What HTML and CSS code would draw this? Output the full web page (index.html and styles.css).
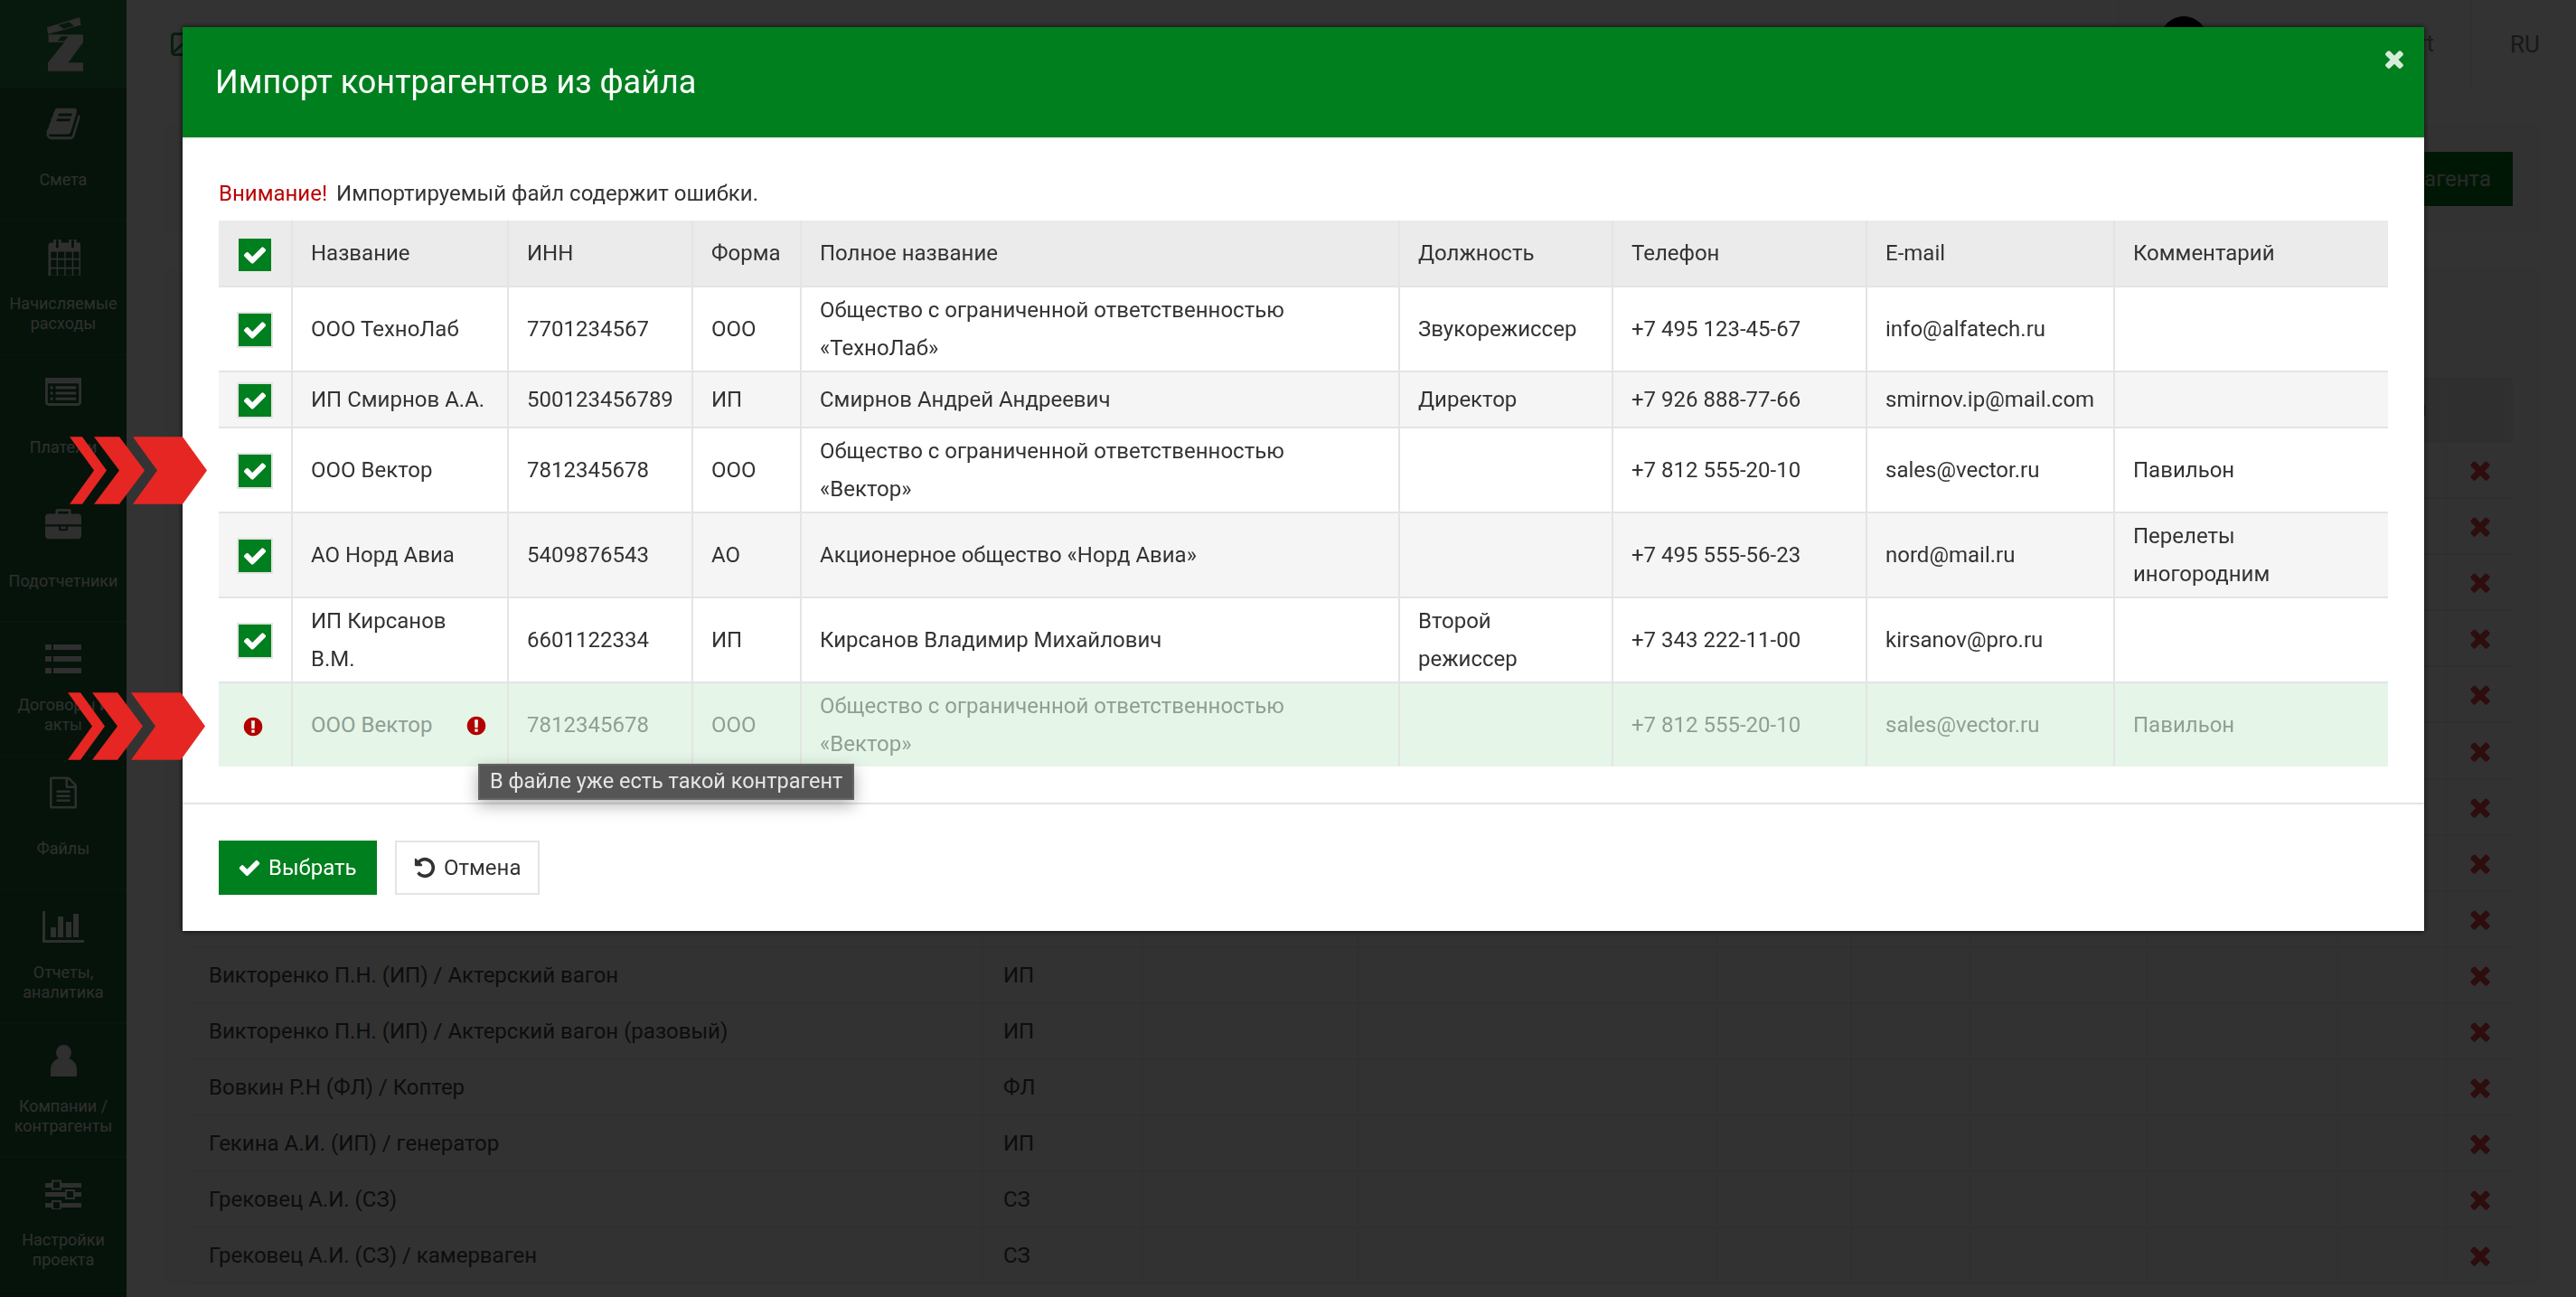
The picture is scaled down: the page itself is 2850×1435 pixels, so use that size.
FILE: index.html
```html
<!DOCTYPE html>
<html lang="ru">
<head>
    <meta charset="UTF-8">
    <title>Импорт контрагентов из файла</title>
    <link rel="stylesheet" href="styles.css">
</head>
<body>
    <svg class="sprite" xmlns="http://www.w3.org/2000/svg">
        <symbol id="i-check" viewBox="0 0 1792 1792"><path d="M1671 566q0 40-28 68l-724 724-136 136q-28 28-68 28t-68-28l-136-136-362-362q-28-28-28-68t28-68l136-136q28-28 68-28t68 28l294 295 656-657q28-28 68-28t68 28l136 136q28 28 28 68z"/></symbol>
        <symbol id="i-times" viewBox="0 0 1792 1792"><path d="M1490 1322q0 40-28 68l-136 136q-28 28-68 28t-68-28l-294-294-294 294q-28 28-68 28t-68-28l-136-136q-28-28-28-68t28-68l294-294-294-294q-28-28-28-68t28-68l136-136q28-28 68-28t68 28l294 294 294-294q28-28 68-28t68 28l136 136q28 28 28 68t-28 68l-294 294 294 294q28 28 28 68z"/></symbol>
        <symbol id="i-alert" viewBox="0 0 1792 1792"><path d="M896 128q209 0 385.5 103t279.5 279.5 103 385.5-103 385.5-279.5 279.5-385.5 103-385.5-103-279.5-279.5-103-385.5 103-385.5 279.5-279.5 385.5-103zm128 1247v-190q0-14-9-23.5t-22-9.5h-192q-13 0-23 10t-10 23v190q0 13 10 23t23 10h192q13 0 22-9.5t9-23.5zm-2-344l18-621q0-12-10-18-10-8-24-8h-220q-14 0-24 8-10 6-10 18l17 621q0 10 10 17.5t24 7.5h185q14 0 23.5-7.5t11.5-17.5z"/></symbol>
        <symbol id="i-undo" viewBox="0 0 1792 1792"><path d="M1664 896q0 156-61 298t-164 245-245 164-298 61q-172 0-327-72.5t-264-204.5q-7-10-6.5-22.5t8.5-20.5l137-138q10-9 25-9 16 2 23 12 73 95 179 147t225 52q104 0 198.5-40.5t163.5-109.5 109.5-163.5 40.5-198.5-40.5-198.5-109.5-163.5-163.5-109.5-198.5-40.5q-98 0-188 35.5t-160 101.5l137 138q31 30 14 69-17 40-59 40h-448q-26 0-45-19t-19-45v-448q0-42 40-59 39-17 69 14l130 129q107-101 244.5-156.5t284.5-55.5q156 0 298 61t245 164 164 245 61 298z"/></symbol>
        <symbol id="i-arrow" viewBox="0 0 152 74.5"><path d="M0 0h14l27 37.25-27 37.25H0l27-37.25zM27 0h28l28 37.25-28 37.25H27l28-37.25zM70 0h55l27 37.25-27 37.25H70l27-37.25z"/></symbol>
    </svg>

    <div class="page">
        <!-- Left navigation -->
        <nav class="sidebar">
            <div class="logo">
                <svg viewBox="0 0 42 62" width="42" height="62">
                    <path fill-rule="evenodd" d="M1 13.3 37 2.3l1.600 8.400-36.600 10zM13.600 10.700l5.700 4.300 11.700-3.300-5.700-4.400z"/>
                    <path fill-rule="evenodd" d="M2.600 21.300h38.400v8.400L24.600 52.300h16.400v9.400H2v-9.400l18.300-22.600H2.600zM12.600 28.300h7.700l4.300-5h-7.600z"/>
                </svg>
            </div>
            <a class="nav-item">
                <span class="nav-icon"><svg viewBox="0 0 1792 1792" width="40" height="40"><path d="M1703 478q40 57 18 129l-275 906q-19 64-76.500 107.500t-122.500 43.500h-923q-77 0-148.500-53.500t-99.500-131.500q-24-67-2-127 0-4 3-27t4-37q1-8-3-21.500t-3-19.500q2-11 8-21t16.500-23.500 16.500-23.500q23-38 45-91.500t30-91.500q3-10 .5-30t-.5-28q3-11 17-28t17-23q21-36 42-92t25-90q1-9-2.500-32t.5-28q4-13 22-30.500t22-22.500q19-26 42.500-84.500t27.500-96.500q1-8-3-25.500t-2-26.500q2-8 9-18t18-23 17-21q8-12 16.500-30.500t15-35 16-36 19.500-32 26.500-23.500 36-11.500 47.500 5.500l-1 3q38-9 51-9h761q74 0 114 56t18 130l-274 906q-36 119-71.500 153.500t-128.500 34.500h-869q-27 0-38 15-11 16-1 43 24 70 144 70h923q29 0 56-15.500t35-41.500l300-987q7-22 5-57 38 15 59 43zm-1064 2q-4 13 2 22.500t20 9.500h608q13 0 25.500-9.500t16.500-22.500l21-64q4-13-2-22.500t-20-9.500h-608q-13 0-25.500 9.500t-16.500 22.500zm-83 256q-4 13 2 22.500t20 9.500h608q13 0 25.500-9.500t16.500-22.500l21-64q4-13-2-22.500t-20-9.500h-608q-13 0-25.500 9.500t-16.500 22.500z"/></svg></span>
                <span class="nav-label">Смета</span>
            </a>
            <a class="nav-item">
                <span class="nav-icon"><svg viewBox="0 120 1664 1550" width="37" height="40" preserveAspectRatio="none"><path d="M192 1664h288v-288h-288v288zm352 0h320v-288h-320v288zm-352-352h288v-320h-288v320zm352 0h320v-320h-320v320zm-352-384h288v-288h-288v288zm736 736h320v-288h-320v288zm-384-736h320v-288h-320v288zm768 736h288v-288h-288v288zm-384-352h320v-320h-320v320zm-352-864v-288q0-13-9.500-22.500t-22.500-9.500h-64q-13 0-22.500 9.500t-9.500 22.500v288q0 13 9.500 22.500t22.500 9.500h64q13 0 22.500-9.500t9.500-22.500zm736 864h288v-320h-288v320zm-384-384h320v-288h-320v288zm384 0h288v-288h-288v288zm32-480v-288q0-13-9.500-22.500t-22.500-9.500h-64q-13 0-22.500 9.500t-9.500 22.500v288q0 13 9.500 22.500t22.500 9.500h64q13 0 22.500-9.500t9.500-22.500zm384-64v1280q0 52-38 90t-90 38h-1408q-52 0-90-38t-38-90v-1280q0-52 38-90t90-38h128v-96q0-66 47-113t113-47h64q66 0 113 47t47 113v96h384v-96q0-66 47-113t113-47h64q66 0 113 47t47 113v96h128q52 0 90 38t38 90z"/></svg></span>
                <span class="nav-label">Начисляемые<br>расходы</span>
            </a>
            <a class="nav-item">
                <span class="nav-icon"><svg viewBox="0 256 1792 1280" width="40" height="31" preserveAspectRatio="none"><path d="M384 1184v64q0 13-9.500 22.500t-22.500 9.500h-64q-13 0-22.500-9.500t-9.500-22.500v-64q0-13 9.500-22.500t22.500-9.500h64q13 0 22.500 9.500t9.500 22.500zm0-256v64q0 13-9.500 22.500t-22.500 9.500h-64q-13 0-22.500-9.500t-9.500-22.500v-64q0-13 9.500-22.500t22.500-9.500h64q13 0 22.500 9.500t9.500 22.500zm0-256v64q0 13-9.500 22.500t-22.500 9.500h-64q-13 0-22.500-9.500t-9.500-22.500v-64q0-13 9.500-22.500t22.500-9.500h64q13 0 22.500 9.500t9.500 22.500zm1152 512v64q0 13-9.500 22.500t-22.500 9.500h-960q-13 0-22.500-9.500t-9.500-22.500v-64q0-13 9.500-22.500t22.500-9.500h960q13 0 22.500 9.500t9.500 22.500zm0-256v64q0 13-9.500 22.500t-22.500 9.500h-960q-13 0-22.500-9.500t-9.500-22.500v-64q0-13 9.500-22.500t22.500-9.500h960q13 0 22.500 9.500t9.500 22.500zm0-256v64q0 13-9.500 22.500t-22.500 9.500h-960q-13 0-22.500-9.500t-9.500-22.500v-64q0-13 9.500-22.500t22.500-9.500h960q13 0 22.500 9.500t9.500 22.500zm128 704v-832q0-13-9.500-22.500t-22.500-9.500h-1472q-13 0-22.500 9.500t-9.500 22.500v832q0 13 9.500 22.500t22.500 9.500h1472q13 0 22.500-9.500t9.500-22.500zm128-1088v1088q0 66-47 113t-113 47h-1472q-66 0-113-47t-47-113v-1088q0-66 47-113t113-47h1472q66 0 113 47t47 113z"/></svg></span>
                <span class="nav-label">Платежи</span>
            </a>
            <a class="nav-item">
                <span class="nav-icon"><svg viewBox="0 0 1792 1664" width="40" height="36" preserveAspectRatio="none"><path d="M640 256h512v-128h-512v128zm1152 640v480q0 66-47 113t-113 47h-1472q-66 0-113-47t-47-113v-480h672v160q0 26 19 45t45 19h320q26 0 45-19t19-45v-160h672zm-768 0v128h-256v-128h256zm768-480v384h-1792v-384q0-66 47-113t113-47h352v-160q0-40 28-68t68-28h576q40 0 68 28t28 68v160h352q66 0 113 47t47 113z"/></svg></span>
                <span class="nav-label">Подотчетники</span>
            </a>
            <a class="nav-item">
                <span class="nav-icon"><svg viewBox="0 0 40 33" width="40" height="33"><rect width="7" height="6" y="0"/><rect x="9" width="31" height="6" y="0"/><rect width="7" height="6" y="13"/><rect x="9" width="31" height="6" y="13"/><rect width="7" height="6" y="26"/><rect x="9" width="31" height="6" y="26"/></svg></span>
                <span class="nav-label">Договоры и<br>акты</span>
            </a>
            <a class="nav-item">
                <span class="nav-icon"><svg viewBox="128 0 1536 1792" width="30" height="36"><path d="M1596 380q28 28 48 76t20 88v1152q0 40-28 68t-68 28h-1344q-40 0-68-28t-28-68v-1600q0-40 28-68t68-28h896q40 0 88 20t76 48zm-444-244v376h376q-10-29-22-41l-313-313q-12-12-41-22zm384 1528v-1024h-416q-40 0-68-28t-28-68v-416h-768v1536h1280zm-1024-864q0-14 9-23t23-9h704q14 0 23 9t9 23v64q0 14-9 23t-23 9h-704q-14 0-23-9t-9-23v-64zm736 224q14 0 23 9t9 23v64q0 14-9 23t-23 9h-704q-14 0-23-9t-9-23v-64q0-14 9-23t23-9h704zm0 256q14 0 23 9t9 23v64q0 14-9 23t-23 9h-704q-14 0-23-9t-9-23v-64q0-14 9-23t23-9h704z"/></svg></span>
                <span class="nav-label">Файлы</span>
            </a>
            <a class="nav-item">
                <span class="nav-icon"><svg viewBox="0 0 46 35" width="46" height="35"><rect width="3" height="35"/><rect y="32" width="46" height="3"/><rect x="9" y="18" width="6" height="11"/><rect x="17" y="6" width="6" height="23"/><rect x="26" y="12" width="6" height="17"/><rect x="34" y="3" width="6" height="26"/></svg></span>
                <span class="nav-label">Отчеты,<br>аналитика</span>
            </a>
            <a class="nav-item">
                <span class="nav-icon"><svg viewBox="0 0 29 35" width="29" height="35"><ellipse cx="14.500" cy="8.500" rx="8.500" ry="8.500"/><path d="M0 35v-8c0-7 6-12 10-12 3 2 6 2 9 0 4 0 10 5 10 12v8q0 0-3 0H3q-3 0-3 0z"/></svg></span>
                <span class="nav-label">Компании /<br>контрагенты</span>
            </a>
            <a class="nav-item">
                <span class="nav-icon"><svg class="sliders" viewBox="0 0 40 33" width="40" height="33"><rect y="4" width="40" height="5"/><rect y="14" width="40" height="5"/><rect y="26" width="40" height="5"/><rect class="knob" x="8" y="1.500" width="9" height="9"/><rect class="knob" x="23" y="12" width="9" height="9"/><rect class="knob" x="8" y="24" width="9" height="9"/></svg></span>
                <span class="nav-label">Настройки<br>проекта</span>
            </a>
        </nav>

        <!-- Page behind the dialog -->
        <main class="content">
            <header class="topbar">
                <svg class="topbar-icon" viewBox="0 0 26 26" width="26" height="26"><rect x="1.500" y="1.500" width="23" height="23" rx="3"/><path d="M3 22 16 10l8 8"/></svg>
                <div class="topbar-user">
                    <span class="avatar"></span>
                    <span class="user-name">Alex Smart</span>
                </div>
                <span class="lang">RU</span>
            </header>
            <section class="panel panel-actions">
                <button class="add-button">Добавить контрагента</button>
            </section>
            <section class="panel panel-list">
                <div class="list">
                    <div class="list-row list-head"><span class="list-name"></span><span></span><span></span><span></span><span></span><span></span><span></span><span></span><span class="head-end">Опции</span><span></span></div>
                    <div class="list-row"><span class="list-name"></span><span></span><span></span><span></span><span></span><span></span><span></span><span></span><span></span><span class="list-del"><svg><use href="#i-times"/></svg></span></div>
                    <div class="list-row"><span class="list-name"></span><span></span><span></span><span></span><span></span><span></span><span></span><span></span><span></span><span class="list-del"><svg><use href="#i-times"/></svg></span></div>
                    <div class="list-row"><span class="list-name"></span><span></span><span></span><span></span><span></span><span></span><span></span><span></span><span></span><span class="list-del"><svg><use href="#i-times"/></svg></span></div>
                    <div class="list-row"><span class="list-name"></span><span></span><span></span><span></span><span></span><span></span><span></span><span></span><span></span><span class="list-del"><svg><use href="#i-times"/></svg></span></div>
                    <div class="list-row"><span class="list-name"></span><span></span><span></span><span></span><span></span><span></span><span></span><span></span><span></span><span class="list-del"><svg><use href="#i-times"/></svg></span></div>
                    <div class="list-row"><span class="list-name"></span><span></span><span></span><span></span><span></span><span></span><span></span><span></span><span></span><span class="list-del"><svg><use href="#i-times"/></svg></span></div>
                    <div class="list-row"><span class="list-name"></span><span></span><span></span><span></span><span></span><span></span><span></span><span></span><span></span><span class="list-del"><svg><use href="#i-times"/></svg></span></div>
                    <div class="list-row"><span class="list-name"></span><span></span><span></span><span></span><span></span><span></span><span></span><span></span><span></span><span class="list-del"><svg><use href="#i-times"/></svg></span></div>
                    <div class="list-row"><span class="list-name">Викторенко П.Н. (ИП) / Транспорт</span><span>ИП</span><span></span><span></span><span></span><span></span><span></span><span></span><span></span><span class="list-del"><svg><use href="#i-times"/></svg></span></div>
                    <div class="list-row"><span class="list-name">Викторенко П.Н. (ИП) / Актерский вагон</span><span>ИП</span><span></span><span></span><span></span><span></span><span></span><span></span><span></span><span class="list-del"><svg><use href="#i-times"/></svg></span></div>
                    <div class="list-row"><span class="list-name">Викторенко П.Н. (ИП) / Актерский вагон (разовый)</span><span>ИП</span><span></span><span></span><span></span><span></span><span></span><span></span><span></span><span class="list-del"><svg><use href="#i-times"/></svg></span></div>
                    <div class="list-row"><span class="list-name">Вовкин Р.Н (ФЛ) / Коптер</span><span>ФЛ</span><span></span><span></span><span></span><span></span><span></span><span></span><span></span><span class="list-del"><svg><use href="#i-times"/></svg></span></div>
                    <div class="list-row"><span class="list-name">Гекина А.И. (ИП) / генератор</span><span>ИП</span><span></span><span></span><span></span><span></span><span></span><span></span><span></span><span class="list-del"><svg><use href="#i-times"/></svg></span></div>
                    <div class="list-row"><span class="list-name">Грековец А.И. (СЗ)</span><span>СЗ</span><span></span><span></span><span></span><span></span><span></span><span></span><span></span><span class="list-del"><svg><use href="#i-times"/></svg></span></div>
                    <div class="list-row"><span class="list-name">Грековец А.И. (СЗ) / камерваген</span><span>СЗ</span><span></span><span></span><span></span><span></span><span></span><span></span><span></span><span class="list-del"><svg><use href="#i-times"/></svg></span></div>
                </div>
            </section>
        </main>
    </div>

    <div class="overlay"></div>

    <!-- Import dialog -->
    <div class="modal">
        <div class="modal-header">
            <h1 class="modal-title">Импорт контрагентов из файла</h1>
            <svg class="modal-close"><use href="#i-times"/></svg>
        </div>
        <div class="modal-body">
            <p class="notice"><b class="notice-mark">Внимание!</b> Импортируемый файл содержит ошибки.</p>
            <table class="import-table">
                <colgroup>
                    <col class="col-check"><col class="col-name"><col class="col-inn"><col class="col-form"><col class="col-full"><col class="col-post"><col class="col-phone"><col class="col-mail"><col class="col-note">
                </colgroup>
                <thead>
                    <tr>
                        <th class="cell-check"><span class="check check-plain"><svg><use href="#i-check"/></svg></span></th>
                        <th>Название</th><th>ИНН</th><th>Форма</th><th>Полное название</th><th>Должность</th><th>Телефон</th><th>E-mail</th><th>Комментарий</th>
                    </tr>
                </thead>
                <tbody>
                    <tr>
                        <td class="cell-check"><span class="check"><svg><use href="#i-check"/></svg></span></td>
                        <td>ООО ТехноЛаб</td><td>7701234567</td><td>ООО</td>
                        <td>Общество с ограниченной ответственностью<br>«ТехноЛаб»</td>
                        <td>Звукорежиссер</td><td>+7 495 123-45-67</td><td>info@alfatech.ru</td><td></td>
                    </tr>
                    <tr class="row-short">
                        <td class="cell-check"><span class="check"><svg><use href="#i-check"/></svg></span></td>
                        <td>ИП Смирнов А.А.</td><td>500123456789</td><td>ИП</td>
                        <td>Смирнов Андрей Андреевич</td>
                        <td>Директор</td><td>+7 926 888-77-66</td><td>smirnov.ip@mail.com</td><td></td>
                    </tr>
                    <tr>
                        <td class="cell-check"><span class="check"><svg><use href="#i-check"/></svg></span></td>
                        <td>ООО Вектор</td><td>7812345678</td><td>ООО</td>
                        <td>Общество с ограниченной ответственностью<br>«Вектор»</td>
                        <td></td><td>+7 812 555-20-10</td><td>sales@vector.ru</td><td>Павильон</td>
                    </tr>
                    <tr>
                        <td class="cell-check"><span class="check"><svg><use href="#i-check"/></svg></span></td>
                        <td>АО Норд Авиа</td><td>5409876543</td><td>АО</td>
                        <td>Акционерное общество «Норд Авиа»</td>
                        <td></td><td>+7 495 555-56-23</td><td>nord@mail.ru</td><td>Перелеты<br>иногородним</td>
                    </tr>
                    <tr>
                        <td class="cell-check"><span class="check"><svg><use href="#i-check"/></svg></span></td>
                        <td>ИП Кирсанов<br>В.М.</td><td>6601122334</td><td>ИП</td>
                        <td>Кирсанов Владимир Михайлович</td>
                        <td>Второй<br>режиссер</td><td>+7 343 222-11-00</td><td>kirsanov@pro.ru</td><td></td>
                    </tr>
                    <tr class="row-error">
                        <td class="cell-check"><svg class="alert-icon alert-lead"><use href="#i-alert"/></svg></td>
                        <td class="cell-name">ООО Вектор
                            <svg class="alert-icon alert-name"><use href="#i-alert"/></svg>
                            <span class="tooltip">В файле уже есть такой контрагент</span>
                        </td>
                        <td>7812345678</td><td>ООО</td>
                        <td>Общество с ограниченной ответственностью<br>«Вектор»</td>
                        <td></td><td>+7 812 555-20-10</td><td>sales@vector.ru</td><td>Павильон</td>
                    </tr>
                </tbody>
            </table>
        </div>
        <div class="modal-footer">
            <button class="btn btn-primary"><svg><use href="#i-check"/></svg>Выбрать</button>
            <button class="btn btn-cancel"><svg><use href="#i-undo"/></svg>Отмена</button>
        </div>
    </div>

    <!-- Callout arrows -->
    <svg class="callout callout-first"><use href="#i-arrow"/></svg>
    <svg class="callout callout-second"><use href="#i-arrow"/></svg>
</body>
</html>
```
FILE: styles.css
```css
/* Reset */
html, body {
    margin: 0;
    padding: 0;
    height: 100%;
    overflow: hidden;
}

body {
    font-family: Roboto, "Liberation Sans", sans-serif;
    font-size: 24px;
    color: #333;
    background: #fff;
}

.sprite {
    position: absolute;
    width: 0;
    height: 0;
}

/* Page behind the dialog */
.page {
    display: flex;
    height: 100vh;
    overflow: hidden;
}

.sidebar {
    flex: 0 0 140px;
    display: flex;
    flex-direction: column;
    background-color: #1c6234;
    color: #e8e8e8;
    fill: #e8e8e8;
}

.logo {
    height: 97px;
    display: flex;
    justify-content: center;
    align-items: flex-start;
    box-sizing: border-box;
    background-color: #257a40;
}

.logo svg {
    margin: 17px 0 0 3px;
}

.nav-item {
    height: 148px;
    flex: none;
    box-sizing: border-box;
    border-bottom: 2px solid #276f3f;
    padding-top: 14px;
    display: flex;
    flex-direction: column;
    align-items: center;
}

.nav-icon {
    height: 52px;
    display: flex;
    align-items: center;
    justify-content: center;
}

.nav-label {
    margin-top: 14px;
    height: 44px;
    display: flex;
    align-items: center;
    text-align: center;
    font-size: 18px;
    line-height: 22px;
}

.sliders .knob {
    fill: #1c6234;
    stroke: #e8e8e8;
    stroke-width: 2;
}

.content {
    flex: 1;
    min-width: 0;
    background-color: #fff;
}

.topbar {
    height: 97px;
    display: flex;
    align-items: center;
}

.topbar-icon {
    margin-left: 49px;
    fill: none;
    stroke: #2f8f47;
    stroke-width: 3;
}

.topbar-user {
    margin-left: auto;
    width: 393px;
    height: 100%;
    box-sizing: border-box;
    display: flex;
    align-items: flex-start;
    padding-left: 46px;
    border-left: 2px solid #f2f2f2;
    border-right: 2px solid #f2f2f2;
}

.avatar {
    width: 52px;
    height: 52px;
    margin-top: 18px;
    border-radius: 50%;
    background: #000;
    flex: none;
}

.user-name {
    margin: 33px 0 0 auto;
    padding-right: 40px;
    font-size: 26px;
    color: #7a8a80;
}

.lang {
    width: 115px;
    text-align: center;
    font-size: 26px;
    padding-left: 2px;
    box-sizing: border-box;
    color: #7a7a7a;
}

.panel {
    margin: 0 40px;
    background: #f9f9f9;
}

.panel-actions {
    margin-top: 40px;
    height: 120px;
    box-sizing: border-box;
    padding: 31px 30px;
    display: flex;
    justify-content: flex-end;
}

.add-button {
    width: 330px;
    height: 60px;
    border: none;
    background-color: #09761a;
    color: #ccc;
    font: inherit;
    text-align: right;
    padding: 0 24px;
}

.panel-list {
    margin-top: 40px;
    padding: 120px 30px 0;
}

.list-row {
    display: grid;
    grid-template-columns: 878px 177px 238px 398px 148px 132px 195px 212px 119px 73px;
    height: 62.100px;
    box-sizing: border-box;
    border-bottom: 2px solid #e8e8e8;
    background: #f7f7f7;
}

.list-row span {
    display: flex;
    align-items: center;
    padding-left: 22px;
    box-sizing: border-box;
    border-right: 2px solid #f0f0f0;
    color: #444;
}

.list-row .list-name {
    padding-left: 21px;
}

.list-head {
    height: 73px;
    background: #e8e8e8;
}

.list-head .head-end {
    padding: 0 21px 0 0;
    justify-content: flex-end;
    color: #000;
    font-weight: 500;
}

.list-row .list-del {
    padding: 0;
    justify-content: center;
    border-right: none;
    fill: #e04040;
}

.list-del svg {
    width: 32px;
    height: 32px;
}

/* Dialog */
.overlay {
    position: fixed;
    inset: 0;
    background: rgba(0, 0, 0, 0.8);
}

.modal {
    position: fixed;
    top: 30px;
    left: 202px;
    width: 2480px;
    height: 1000px;
    background: #fff;
    box-shadow: 0 0 6px rgba(0, 0, 0, 0.8);
    display: flex;
    flex-direction: column;
}

.modal-header {
    height: 122px;
    flex: none;
    box-sizing: border-box;
    padding: 0 36px;
    display: flex;
    align-items: center;
    background-color: #007f1e;
}

.modal-title {
    margin: 0;
    font-size: 36px;
    font-weight: 400;
    color: #fff;
}

.modal-close {
    position: absolute;
    top: 20px;
    right: 18px;
    width: 30px;
    height: 30px;
    fill: #d5ecd9;
}

.modal-body {
    flex: 1;
    padding: 0 40px;
    border-top: 2px solid #eee;
}

.notice {
    margin: 0;
    height: 90px;
    box-sizing: border-box;
    padding-top: 39px;
    line-height: 42px;
}

.notice-mark {
    font-weight: 400;
    color: #b80000;
    margin-right: 4px;
}

/* Import table */
.import-table {
    width: 2400px;
    table-layout: fixed;
    border-collapse: separate;
    border-spacing: 0;
    line-height: 42px;
}

.col-check { width: 82px; }
.col-name { width: 239px; }
.col-inn { width: 204px; }
.col-form { width: 120px; }
.col-full { width: 662px; }
.col-post { width: 236px; }
.col-phone { width: 281px; }
.col-mail { width: 274px; }
.col-note { width: 302px; }

.import-table th,
.import-table td {
    box-sizing: border-box;
    padding: 4px 19px 4px 20px;
    text-align: left;
    font-weight: 400;
    vertical-align: middle;
    border-right: 2px solid #e4e4e4;
    border-bottom: 2px solid #e4e4e4;
    white-space: nowrap;
}

.import-table th:last-child,
.import-table td:last-child {
    border-right: none;
}

.import-table thead th {
    height: 74px;
    background-color: #ebebeb;
}

.import-table tbody td {
    height: 94px;
}

.import-table .row-short td {
    height: 62px;
}

.import-table tbody tr:nth-child(even) td {
    background-color: #f5f5f5;
}

.import-table .cell-check {
    padding: 0;
    text-align: center;
}

.check {
    display: inline-flex;
    align-items: center;
    justify-content: center;
    box-sizing: border-box;
    width: 40px;
    height: 40px;
    vertical-align: middle;
    background-color: #007f1e;
    border: 2px solid #e4e4e4;
    fill: #fff;
}

.check-plain {
    width: 36px;
    height: 36px;
    border: none;
}

.check svg {
    width: 28px;
    height: 28px;
}

.import-table tbody tr.row-error td {
    height: 92px;
    border-bottom: none;
    background-color: #e5f5e8;
    color: #8f9f93;
}

.alert-icon {
    width: 24px;
    height: 24px;
    fill: #b30000;
}

.alert-lead {
    vertical-align: middle;
    margin-right: 4px;
}

.import-table .cell-name {
    position: relative;
}

.alert-name {
    position: absolute;
    top: 35px;
    right: 22px;
}

.tooltip {
    position: absolute;
    top: 89px;
    left: 205px;
    z-index: 2;
    padding: 0 11px;
    height: 36px;
    line-height: 35px;
    white-space: nowrap;
    font-size: 23.500px;
    color: #e6e6e6;
    background-color: #555;
    border: 2px solid #636363;
    box-shadow: 0 6px 18px rgba(0, 0, 0, 0.3);
}

/* Footer */
.modal-footer {
    flex: none;
    height: 142px;
    box-sizing: border-box;
    border-top: 2px solid #e4e4e4;
    padding: 40px 40px 0;
    display: flex;
    align-items: flex-start;
    gap: 20px;
}

.btn {
    height: 60px;
    display: inline-flex;
    align-items: center;
    font: inherit;
    cursor: pointer;
}

.btn svg {
    width: 26px;
    height: 26px;
    margin-right: 8px;
}

.btn-primary {
    width: 175px;
    padding: 0 0 0 21px;
    background-color: #007f1e;
    color: #fff;
    fill: #fff;
    border: none;
}

.btn-cancel {
    width: 160px;
    padding: 0 0 0 18px;
    background-color: #fff;
    color: #333;
    fill: #333;
    border: 2px solid #e4e4e4;
}

/* Callout arrows */
.callout {
    position: fixed;
    width: 152px;
    height: 75px;
    fill: #e52622;
}

.callout-first {
    top: 483px;
    left: 77px;
}

.callout-second {
    top: 766px;
    left: 75px;
}
```
